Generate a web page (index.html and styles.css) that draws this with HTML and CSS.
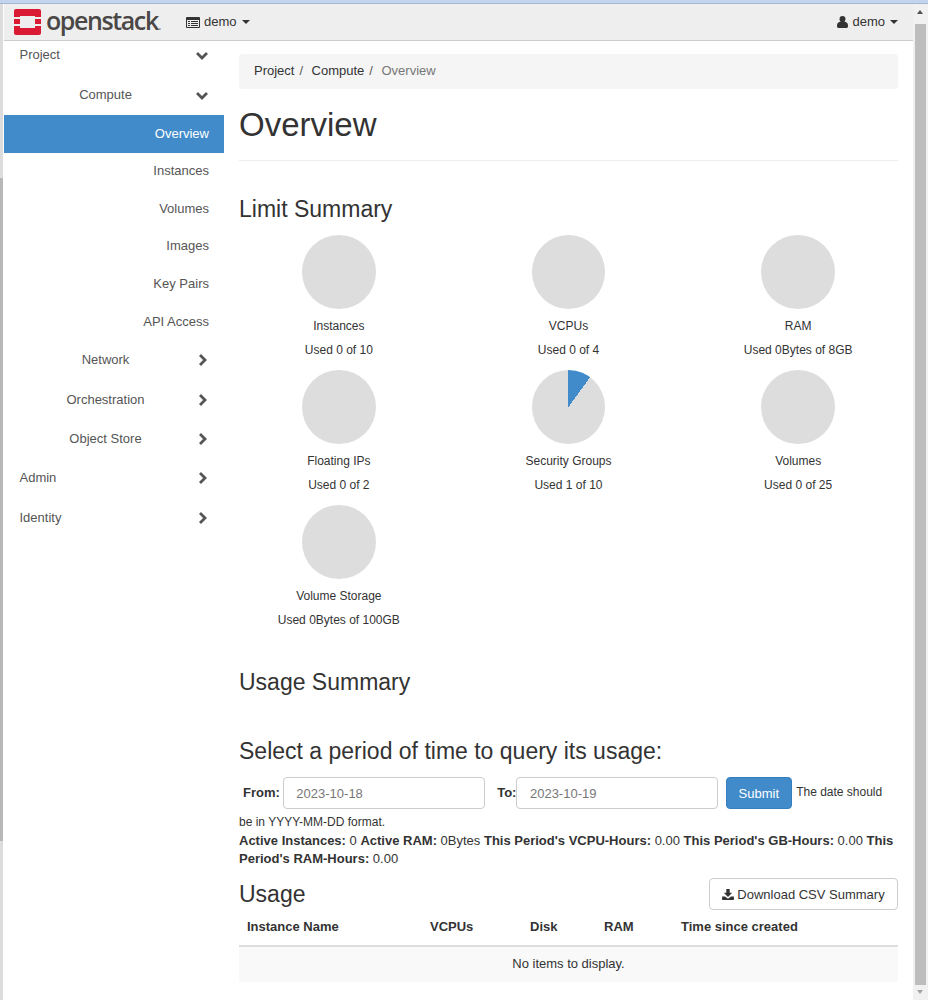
FILE: index.html
```html
<!DOCTYPE html>
<html lang="en">
<head>
<meta charset="utf-8">
<title>Overview</title>
<link rel="stylesheet" href="styles.css">
</head>
<body>
<div class="chrome-top"></div>
<div class="window">
  <div class="edge"><div class="edge-thumb"></div></div>
  <div class="viewport">
    <header class="navbar">
      <div class="nav-left">
        <div class="logo">
          <svg class="logo-mark" width="27" height="26" viewBox="0 0 27 26"><path fill="#da1a32" d="M2 0h23a2 2 0 0 1 2 2v6h-6V7H6v1H0V2a2 2 0 0 1 2-2zM0 10h6v5H0zM21 10h6v5h-6zM0 17h6v2h15v-2h6v7a2 2 0 0 1-2 2H2a2 2 0 0 1-2-2z"/></svg>
          <span class="logo-text">openstack<span class="logo-dot">.</span></span>
        </div>
        <div class="project-menu">
          <svg class="tasks-icon" width="14" height="11" viewBox="0 0 14 11"><path fill="#333" fill-rule="evenodd" d="M1 0h12a1 1 0 0 1 1 1v9a1 1 0 0 1-1 1H1a1 1 0 0 1-1-1V1a1 1 0 0 1 1-1zm0 3v7h12V3zm1 1h2v1H2zm3 0h7v1H5zM2 6h2v1H2zm3 0h7v1H5zM2 8h2v1H2zm3 0h7v1H5z"/></svg>
          <span>demo</span><span class="caret"></span>
        </div>
      </div>
      <div class="user-menu">
        <svg class="user-icon" width="11" height="12" viewBox="0 0 11 12"><path fill="#333" d="M5.500 0a3 3 0 0 1 3 3 3 3 0 0 1-1.200 2.600c2 .3 3.700 1.500 3.700 4v1A1.400 1.400 0 0 1 9.600 12H1.400A1.400 1.400 0 0 1 0 10.600v-1c0-2.500 1.700-3.700 3.700-4A3 3 0 0 1 2.500 3a3 3 0 0 1 3-3z"/></svg>
        <span>demo</span><span class="caret"></span>
      </div>
    </header>
    <div class="layout">
      <nav class="sidebar">
        <div class="side-item top first"><span>Project</span><svg class="chev chev-d" width="14" height="10" viewBox="0 0 14 10"><path d="M2 2l5 5 5-5" fill="none" stroke="#555" stroke-width="2.800"/></svg></div>
        <div class="side-item group second"><span>Compute</span><svg class="chev chev-d" width="14" height="10" viewBox="0 0 14 10"><path d="M2 2l5 5 5-5" fill="none" stroke="#555" stroke-width="2.800"/></svg></div>
        <div class="side-link active">Overview</div>
        <div class="side-link">Instances</div>
        <div class="side-link">Volumes</div>
        <div class="side-link">Images</div>
        <div class="side-link">Key Pairs</div>
        <div class="side-link">API Access</div>
        <div class="side-item group"><span>Network</span><svg class="chev chev-r" width="14" height="14" viewBox="0 0 14 14"><path d="M4 2l5 5-5 5" fill="none" stroke="#555" stroke-width="2.800"/></svg></div>
        <div class="side-item group"><span>Orchestration</span><svg class="chev chev-r" width="14" height="14" viewBox="0 0 14 14"><path d="M4 2l5 5-5 5" fill="none" stroke="#555" stroke-width="2.800"/></svg></div>
        <div class="side-item group"><span>Object Store</span><svg class="chev chev-r" width="14" height="14" viewBox="0 0 14 14"><path d="M4 2l5 5-5 5" fill="none" stroke="#555" stroke-width="2.800"/></svg></div>
        <div class="side-item top"><span>Admin</span><svg class="chev chev-r" width="14" height="14" viewBox="0 0 14 14"><path d="M4 2l5 5-5 5" fill="none" stroke="#555" stroke-width="2.800"/></svg></div>
        <div class="side-item top"><span>Identity</span><svg class="chev chev-r" width="14" height="14" viewBox="0 0 14 14"><path d="M4 2l5 5-5 5" fill="none" stroke="#555" stroke-width="2.800"/></svg></div>
      </nav>
      <main class="content">
        <div class="breadcrumb"><span>Project</span><span class="sep">/</span><span>Compute</span><span class="sep">/</span><span class="crumb-active">Overview</span></div>
        <h1 class="page-title">Overview</h1>
        <h3 class="limit-title">Limit Summary</h3>
        <div class="charts">
          <div class="chart"><div class="pie"></div><div class="chart-name">Instances</div><div class="chart-used">Used 0 of 10</div></div>
          <div class="chart"><div class="pie"></div><div class="chart-name">VCPUs</div><div class="chart-used">Used 0 of 4</div></div>
          <div class="chart"><div class="pie"></div><div class="chart-name">RAM</div><div class="chart-used">Used 0Bytes of 8GB</div></div>
          <div class="chart"><div class="pie"></div><div class="chart-name">Floating IPs</div><div class="chart-used">Used 0 of 2</div></div>
          <div class="chart"><div class="pie pie-10"></div><div class="chart-name">Security Groups</div><div class="chart-used">Used 1 of 10</div></div>
          <div class="chart"><div class="pie"></div><div class="chart-name">Volumes</div><div class="chart-used">Used 0 of 25</div></div>
          <div class="chart"><div class="pie"></div><div class="chart-name">Volume Storage</div><div class="chart-used">Used 0Bytes of 100GB</div></div>
        </div>
        <h3 class="usage-title">Usage Summary</h3>
        <h3 class="period-title">Select a period of time to query its usage:</h3>
        <div class="date-form">
          <label class="date-label from">From:</label><input class="date-input" type="text" placeholder="2023-10-18">
          <label class="date-label to">To:</label><input class="date-input" type="text" placeholder="2023-10-19">
          <button class="btn-submit" type="button">Submit</button>
          <span class="help-text">The date should be in YYYY-MM-DD format.</span>
        </div>
        <p class="stats"><b>Active Instances:</b> 0 <b>Active RAM:</b> 0Bytes <b>This Period's VCPU-Hours:</b> 0.00 <b>This Period's GB-Hours:</b> 0.00 <b>This Period's RAM-Hours:</b> 0.00</p>
        <div class="usage-head">
          <h3 class="usage-h">Usage</h3>
          <button class="btn-csv" type="button">
            <svg width="12" height="11" viewBox="0 0 14 13"><path fill="#333" d="M5 0h4v4.500h3L7 9.500l-5-5h3zM0 9h3.500L7 11.500 10.500 9H14v3a1 1 0 0 1-1 1H1a1 1 0 0 1-1-1z"/></svg>
            Download CSV Summary
          </button>
        </div>
        <table class="usage-table">
          <thead><tr><th class="c1">Instance Name</th><th class="c2">VCPUs</th><th class="c3">Disk</th><th class="c4">RAM</th><th>Time since created</th></tr></thead>
          <tbody><tr><td colspan="5">No items to display.</td></tr></tbody>
        </table>
      </main>
    </div>
  </div>
  <div class="scrollbar">
    <div class="arrow-up"></div>
    <div class="thumb"></div>
    <div class="arrow-down"></div>
  </div>
</div>
</body>
</html>
```

FILE: styles.css
```css
* { box-sizing: border-box; }
html, body { margin: 0; padding: 0; height: 1000px; overflow: hidden; background: #fff; }
body { font-family: "Liberation Sans", Arial, sans-serif; font-size: 13px; line-height: 20px; color: #333; }
.chrome-top { height: 4px; background: #c3d5ee; border-bottom: 1px solid #a9b8cf; }
.window { display: flex; height: 996px; }
.edge { width: 4px; background: #dcdcdc; border-right: 1px solid #fff; position: relative; flex: none; }
.edge-thumb { position: absolute; left: 0; right: 0; top: 174px; height: 663px; background: #b8b8b8; }
.viewport { flex: 1; min-width: 0; }
.navbar { height: 37px; background: #eee; border-bottom: 1px solid #ccc; display: flex; justify-content: space-between; align-items: center; }
.nav-left { display: flex; align-items: center; }
.logo { display: flex; align-items: center; margin-left: 10px; width: 172px; }
.logo-mark { flex: none; }
.logo-text { font-family: "Open Sans", sans-serif; font-weight: 600; font-size: 25px; line-height: 27px; letter-spacing: -1.400px; color: #4a4746; margin-left: 5px; }
.logo-dot { color: #999; font-size: 14px; letter-spacing: 0; }
.project-menu { display: flex; align-items: center; color: #333; }
.tasks-icon { margin-right: 4px; }
.caret { display: inline-block; border-top: 4px solid #333; border-left: 4px solid transparent; border-right: 4px solid transparent; margin-left: 5px; }
.user-menu { display: flex; align-items: center; margin-right: 15px; }
.user-icon { margin-right: 4px; }
.layout { display: flex; }
.sidebar { width: 220px; flex: none; color: #555; }
.side-item { position: relative; height: 39.400px; display: flex; align-items: center; }
.side-item.top { padding-left: 15.500px; }
.side-item.group { justify-content: center; padding-right: 17px; }
.side-item.first { height: 27px; }
.side-item.second { height: 47px; padding-top: 7px; }
.side-item .chev { position: absolute; top: 50%; }
.chev-r { right: 14.500px; margin-top: -7px; }
.chev-d { right: 15px; }
.side-item.first .chev-d { margin-top: -4px; }
.side-item.second .chev-d { margin-top: -1px; }
.side-link { height: 37.700px; padding-right: 15px; display: flex; align-items: center; justify-content: flex-end; }
.side-link.active { background: #428bca; color: #fff; height: 38px; margin-bottom: -1px; }
.content { width: 659px; margin-left: 15px; padding-top: 13px; }
.breadcrumb { height: 35px; background: #f5f5f5; border-radius: 4px; padding: 7px 15px; }
.breadcrumb .sep { color: #555; padding: 0 8.500px 0 5px; }
.crumb-active { color: #777; }
.page-title { font-size: 33px; font-weight: 400; line-height: 36px; margin: 18px 0 0; padding-bottom: 17px; border-bottom: 1px solid #eee; }
.limit-title { font-size: 23px; line-height: 26px; font-weight: 400; margin: 35px 0 0; }
.charts { display: grid; grid-template-columns: repeat(3, 199.670px); column-gap: 30px; margin-top: 13px; }
.chart { height: 135px; text-align: center; font-size: 12px; }
.pie { width: 73.500px; height: 74px; border-radius: 50%; margin: 0 auto; background: #ddd; }
.pie-10 { background: conic-gradient(#428bca 0 10%, #ddd 10% 100%); }
.chart-name { margin-top: 7px; line-height: 20px; }
.chart-used { margin-top: 4px; line-height: 20px; }
.usage-title { font-size: 23px; line-height: 26px; font-weight: 400; margin: 29px 0 0; }
.period-title { font-size: 23px; line-height: 26px; font-weight: 400; margin: 43px 0 0; }
.date-form { margin-top: 13px; font-size: 12px; line-height: 20px; }
.date-form::before { content: ""; display: inline-block; height: 35px; vertical-align: top; }
.date-label { font-size: 13px; font-weight: 700; vertical-align: middle; }
.date-label.from { margin-left: .670px; margin-right: 3px; }
.date-label.to { margin-left: 9px; }
.date-input { width: 202px; height: 32px; border: 1px solid #ccc; border-radius: 4px; padding: 0 12.500px; font: 13px "Liberation Sans", sans-serif; vertical-align: middle; color: #555; }
.date-input::placeholder { color: #777; opacity: 1; }
.btn-submit { height: 32px; width: 66px; padding: 0; margin-left: 4px; border: 1px solid #357ebd; border-radius: 4px; background: #428bca; color: #fff; font: 13px "Liberation Sans", sans-serif; vertical-align: middle; }
.help-text { margin-left: 1px; }
.stats { margin: 0; line-height: 18.300px; }
.usage-head { display: flex; justify-content: space-between; align-items: center; margin-top: 9.500px; }
.usage-h { font-size: 23px; line-height: 26px; font-weight: 400; margin: 0; }
.btn-csv { height: 32px; width: 189px; padding: 0; border: 1px solid #ccc; border-radius: 4px; background: #fff; color: #333; font: 13px "Liberation Sans", sans-serif; display: flex; align-items: center; justify-content: center; gap: 3px; }
.usage-table { width: 100%; border-collapse: collapse; table-layout: fixed; }
.usage-table th { text-align: left; padding: 8px; border-bottom: 2px solid #ddd; line-height: 18.570px; font-weight: 700; }
.usage-table th.c1 { width: 183px; }
.usage-table th.c2 { width: 100px; }
.usage-table th.c3 { width: 74px; }
.usage-table th.c4 { width: 77px; }
.usage-table td { background: #f9f9f9; text-align: center; padding: 8px 8px 9px; line-height: 18.570px; }
.scrollbar { width: 15px; flex: none; background: #f1f1f1; position: relative; }
.thumb { position: absolute; left: 2px; right: 2px; top: 20px; bottom: 15px; background: #bdbdbd; }
.arrow-up { position: absolute; top: 6px; left: 4px; border-bottom: 4px solid #505050; border-left: 3.500px solid transparent; border-right: 3.500px solid transparent; }
.arrow-down { position: absolute; bottom: 6px; left: 4px; border-top: 4px solid #a3a3a3; border-left: 3.500px solid transparent; border-right: 3.500px solid transparent; }
```
